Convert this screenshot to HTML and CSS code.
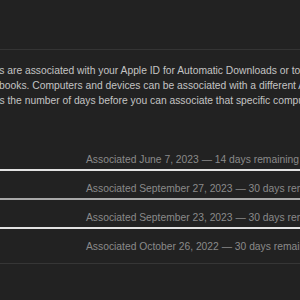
FILE: index.html
```html
<!DOCTYPE html>
<html lang="en">
<head>
  <meta charset="UTF-8" />
  <meta name="viewport" content="width=device-width, initial-scale=1.0" />
  <title>Manage Devices</title>
  <link rel="stylesheet" href="styles.css">
</head>
<body>
  <header class="top-bar"></header>

  <section class="intro">
    <p class="line l1">These computers and devices are associated with your Apple ID for Automatic Downloads or to download previously purchased items.</p>
    <p class="line l2">apps, and books. Computers and devices can be associated with a different Apple ID once every 90 days.</p>
    <p class="line l3">indicates the number of days before you can associate that specific computer or device with a different Apple ID.</p>
  </section>

  <ul class="devices">
    <li class="device mark-light">Associated June 7, 2023 — 14 days remaining</li>
    <li class="device mark-grey">Associated September 27, 2023 — 30 days remaining</li>
    <li class="device mark-light">Associated September 23, 2023 — 30 days remaining</li>
    <li class="device last">Associated October 26, 2022 — 30 days remaining</li>
  </ul>
</body>
</html>
```
FILE: styles.css
```css
* { margin: 0; padding: 0; box-sizing: border-box; }
html, body { height: 100%; }
body {
  background-color: #222222;
  font-family: 'Liberation Sans', Arial, sans-serif;
  font-size: 10.3px;
  overflow: hidden;
}

.top-bar {
  height: 50px;
  border-bottom: 1px solid #343434;
}

/* 잘린 설명 문단 */
.intro {
  padding-top: 13px;
  color: #c4c4c4;
  overflow: hidden;
}
.line { white-space: nowrap; line-height: 15px; }
.l1 { margin-left: -133px; }
.l2 { margin-left: -49px; }
.l3 { margin-left: -36px; }

.devices {
  list-style: none;
  margin-top: 34px;
  border-bottom: 1px solid #363636;
  color: #8a8a8a;
}
.device {
  white-space: nowrap;
  line-height: 14px;
  padding: 11px 0 2px 86px;
}
.mark-light { border-bottom: 2px solid #e2e2e2; }
.mark-grey { border-bottom: 2px solid #a8a8a8; }
.device.last { padding-bottom: 9px; }
```
